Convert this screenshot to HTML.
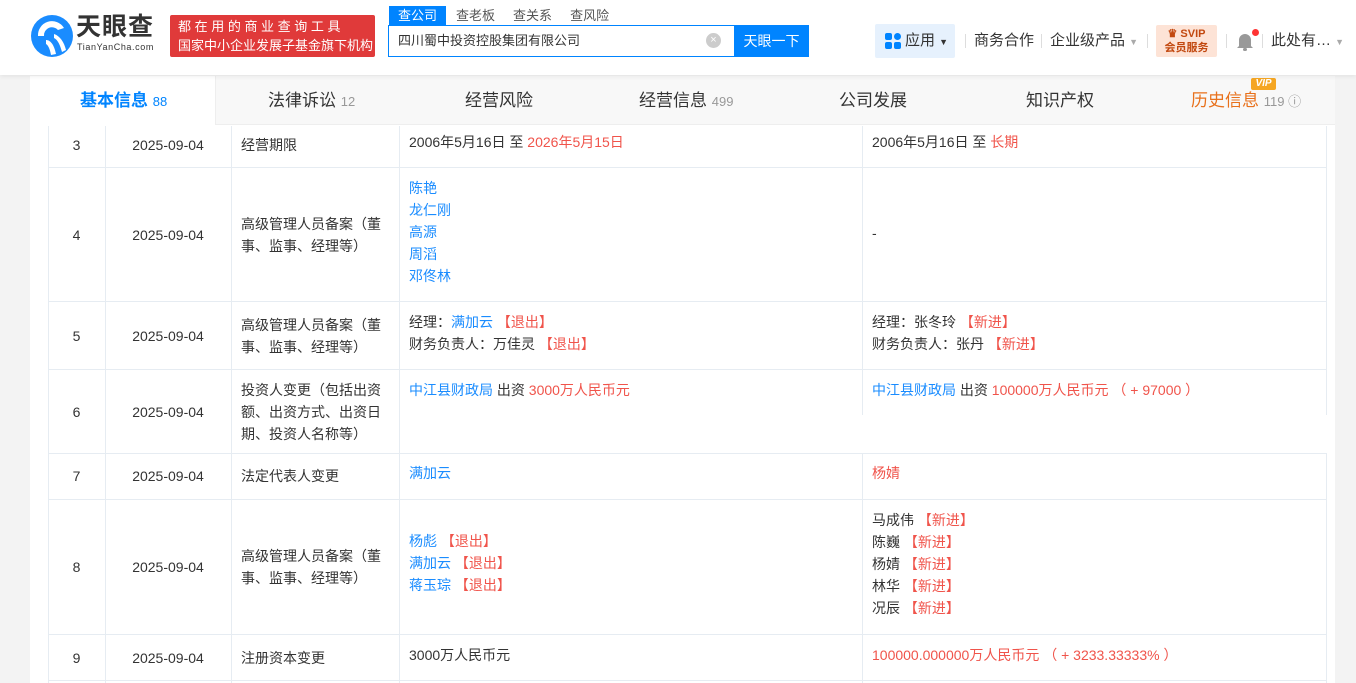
<!DOCTYPE html>
<html><head><meta charset="utf-8"><style>
*{margin:0;padding:0;box-sizing:border-box}
body{width:1356px;height:683px;overflow:hidden;background:#f3f3f3;font-family:"Liberation Sans","Noto Sans CJK SC",sans-serif;font-size:14px;color:#333;position:relative}
.a{position:absolute;white-space:nowrap}
.hdr{position:absolute;left:0;top:0;width:1356px;height:75px;background:#fff;box-shadow:0 2px 4px rgba(0,0,0,.06);z-index:2}
.main{position:absolute;left:30px;top:76px;width:1305px;height:607px;background:#fff}
.tabs{position:absolute;left:30px;top:76px;width:1305px;height:49px;background:#f8f8f8;border-bottom:1px solid #eee}
.tab{position:absolute;top:0;height:49px;line-height:49px;font-size:17px;color:#333}
.tab small{font-size:13px;color:#999}
.bl{color:#1a8cff}.rd{color:#f0544b}
.vl{position:absolute;width:1px;background:#e6ecf2}
.hl{position:absolute;height:1px;background:#e6ecf2}
.c{position:absolute;line-height:22px}
</style></head><body>
<div class="hdr">
 <svg class="a" style="left:30px;top:14px" width="44" height="44" viewBox="0 0 44 44"><circle cx="22" cy="22" r="21" fill="#1a8cff"/><path d="M8 22a14 14 0 0 1 26-8l-6 2a8 8 0 0 0-14 6z" fill="#fff"/><path d="M16 26c4 0 8 4 10 14l-5 1c-1-6-3-10-5-11z" fill="#fff"/><path d="M24 20c6 2 10 8 12 16l-4 2c-2-7-4-12-8-14z" fill="#fff"/></svg>
 <div class="a" style="left:76px;top:13px;font-size:25px;line-height:28px;font-weight:bold;color:#333;letter-spacing:1px">天眼查</div>
 <div class="a" style="left:77px;top:42px;font-size:9px;line-height:10px;color:#333;letter-spacing:.6px">TianYanCha.com</div>
 <div class="a" style="left:170px;top:15px;width:205px;height:42px;background:#e03a3a;border-radius:2px;color:#fff;font-size:13px;line-height:19px;padding:2px 0 0 8px">都 在 用 的 商 业 查 询 工 具<br>国家中小企业发展子基金旗下机构</div>
 <div class="a" style="left:389px;top:6px;width:57px;height:19px;background:#0084ff;color:#fff;font-size:13px;text-align:center;line-height:19px">查公司</div>
 <div class="a" style="left:456px;top:6px;font-size:13px;color:#555;line-height:19px">查老板&nbsp;&nbsp;&nbsp;&nbsp;&nbsp;查关系&nbsp;&nbsp;&nbsp;&nbsp;&nbsp;查风险</div>
 <div class="a" style="left:388px;top:25px;width:421px;height:32px;border:1px solid #0084ff;background:#fff"></div>
 <div class="a" style="left:398px;top:31px;font-size:13px;color:#333;line-height:20px">四川蜀中投资控股集团有限公司</div>
 <div class="a" style="left:706px;top:33px;width:15px;height:15px;border-radius:50%;background:#ccc;color:#fff;font-size:11px;text-align:center;line-height:15px">×</div>
 <div class="a" style="left:734px;top:25px;width:75px;height:32px;background:#0084ff;color:#fff;font-size:14px;text-align:center;line-height:32px">天眼一下</div>
 <div class="a" style="left:875px;top:24px;width:80px;height:34px;background:#e6f1fd;border-radius:2px"></div>
 <svg class="a" style="left:885px;top:33px" width="17" height="16"><rect x="0" y="0" width="7" height="7" rx="2" fill="#0084ff"/><rect x="9" y="0" width="7" height="7" rx="3.5" fill="#0084ff"/><rect x="0" y="9" width="7" height="7" rx="2" fill="#0084ff"/><rect x="9" y="9" width="7" height="7" rx="2" fill="#0084ff"/></svg>
 <div class="a" style="left:905px;top:31px;font-size:15px;line-height:20px">应用 <span style="font-size:9px">▼</span></div>
 <div class="a" style="left:965px;top:34px;width:1px;height:14px;background:#ddd"></div>
 <div class="a" style="left:974px;top:31px;font-size:15px;line-height:20px">商务合作</div>
 <div class="a" style="left:1041px;top:34px;width:1px;height:14px;background:#ddd"></div>
 <div class="a" style="left:1050px;top:31px;font-size:15px;line-height:20px">企业级产品 <span style="font-size:9px;color:#aaa">▼</span></div>
 <div class="a" style="left:1147px;top:34px;width:1px;height:14px;background:#ddd"></div>
 <div class="a" style="left:1156px;top:25px;width:61px;height:32px;background:#fde3d6;border-radius:2px;color:#c2480f;font-size:11px;font-weight:bold;text-align:center;line-height:14px;padding-top:2px">♛ SVIP<br>会员服务</div>
 <div class="a" style="left:1226px;top:34px;width:1px;height:14px;background:#ddd"></div>
 <svg class="a" style="left:1236px;top:31px" width="18" height="20"><path d="M3 15V9a6 6 0 0 1 12 0v6l2 2H1z" fill="#999"/><rect x="7" y="17" width="4" height="3" rx="1.5" fill="#999"/></svg>
 <div class="a" style="left:1252px;top:29px;width:7px;height:7px;border-radius:50%;background:#f33"></div>
 <div class="a" style="left:1262px;top:34px;width:1px;height:14px;background:#ddd"></div>
 <div class="a" style="left:1271px;top:31px;font-size:15px;line-height:20px">此处有… <span style="font-size:9px;color:#aaa">▼</span></div>
</div>
<div class="main"></div>
<div class="tabs">
 <div class="a" style="left:0;top:0;width:186px;height:49px;background:#fff;border-right:1px solid #eee"></div>
 <div class="tab" style="left:50px;color:#0084ff;font-weight:bold">基本信息 <small style="color:#0084ff;font-weight:normal">88</small></div>
 <div class="tab" style="left:238px">法律诉讼 <small>12</small></div>
 <div class="tab" style="left:435px">经营风险</div>
 <div class="tab" style="left:609px">经营信息 <small>499</small></div>
 <div class="tab" style="left:809px">公司发展</div>
 <div class="tab" style="left:996px">知识产权</div>
 <div class="tab" style="left:1161px;color:#e8711c">历史信息 <small>119 ⓘ</small></div>
 <div class="a" style="left:1221px;top:2px;width:25px;height:12px;background:#f5a623;color:#fff;font-size:10px;font-weight:bold;font-style:italic;text-align:center;line-height:12px;border-radius:2px">VIP</div>
</div>
<!-- table lines -->
<div class="vl" style="left:48px;top:126px;height:557px"></div>
<div class="vl" style="left:105px;top:126px;height:557px"></div>
<div class="vl" style="left:231px;top:126px;height:557px"></div>
<div class="vl" style="left:399px;top:126px;height:557px"></div>
<div class="vl" style="left:862px;top:126px;height:557px"></div>
<div class="vl" style="left:1326px;top:126px;height:557px"></div>
<div class="hl" style="left:48px;top:167px;width:1279px"></div>
<div class="hl" style="left:48px;top:301px;width:1279px"></div>
<div class="hl" style="left:48px;top:369px;width:1279px"></div>
<div class="hl" style="left:48px;top:453px;width:1279px"></div>
<div class="hl" style="left:48px;top:499px;width:1279px"></div>
<div class="hl" style="left:48px;top:634px;width:1279px"></div>
<div class="hl" style="left:48px;top:680px;width:1279px"></div>
<div class="a" style="left:862px;top:415px;width:473px;height:38px;background:#fff"></div>
<!-- rows -->
<div class="c" style="left:48px;width:57px;text-align:center;top:134px">3</div>
<div class="c" style="left:105px;width:126px;text-align:center;top:134px">2025-09-04</div>
<div class="c" style="left:241px;top:134px">经营期限</div>
<div class="c" style="left:409px;top:131px">2006年5月16日 至 <span class="rd">2026年5月15日</span></div>
<div class="c" style="left:872px;top:131px">2006年5月16日 至 <span class="rd">长期</span></div>

<div class="c" style="left:48px;width:57px;text-align:center;top:224px">4</div>
<div class="c" style="left:105px;width:126px;text-align:center;top:224px">2025-09-04</div>
<div class="c" style="left:241px;top:213px">高级管理人员备案（董<br>事、监事、经理等）</div>
<div class="c bl" style="left:409px;top:177px">陈艳<br>龙仁刚<br>高源<br>周滔<br>邓佟林</div>
<div class="c" style="left:872px;top:222px">-</div>

<div class="c" style="left:48px;width:57px;text-align:center;top:325px">5</div>
<div class="c" style="left:105px;width:126px;text-align:center;top:325px">2025-09-04</div>
<div class="c" style="left:241px;top:314px">高级管理人员备案（董<br>事、监事、经理等）</div>
<div class="c" style="left:409px;top:311px">经理：<span class="bl">满加云</span> <span class="rd">【退出】</span><br>财务负责人：万佳灵 <span class="rd">【退出】</span></div>
<div class="c" style="left:872px;top:311px">经理：张冬玲 <span class="rd">【新进】</span><br>财务负责人：张丹 <span class="rd">【新进】</span></div>

<div class="c" style="left:48px;width:57px;text-align:center;top:401px">6</div>
<div class="c" style="left:105px;width:126px;text-align:center;top:401px">2025-09-04</div>
<div class="c" style="left:241px;top:379px">投资人变更（包括出资<br>额、出资方式、出资日<br>期、投资人名称等）</div>
<div class="c" style="left:409px;top:379px"><span class="bl">中江县财政局</span> 出资 <span class="rd">3000万人民币元</span></div>
<div class="c" style="left:872px;top:379px"><span class="bl">中江县财政局</span> 出资 <span class="rd">100000万人民币元 （ + 97000 ）</span></div>

<div class="c" style="left:48px;width:57px;text-align:center;top:465px">7</div>
<div class="c" style="left:105px;width:126px;text-align:center;top:465px">2025-09-04</div>
<div class="c" style="left:241px;top:465px">法定代表人变更</div>
<div class="c bl" style="left:409px;top:462px">满加云</div>
<div class="c rd" style="left:872px;top:462px">杨婧</div>

<div class="c" style="left:48px;width:57px;text-align:center;top:556px">8</div>
<div class="c" style="left:105px;width:126px;text-align:center;top:556px">2025-09-04</div>
<div class="c" style="left:241px;top:545px">高级管理人员备案（董<br>事、监事、经理等）</div>
<div class="c" style="left:409px;top:530px"><span class="bl">杨彪</span> <span class="rd">【退出】</span><br><span class="bl">满加云</span> <span class="rd">【退出】</span><br><span class="bl">蒋玉琮</span> <span class="rd">【退出】</span></div>
<div class="c" style="left:872px;top:509px">马成伟 <span class="rd">【新进】</span><br>陈巍 <span class="rd">【新进】</span><br>杨婧 <span class="rd">【新进】</span><br>林华 <span class="rd">【新进】</span><br>况辰 <span class="rd">【新进】</span></div>

<div class="c" style="left:48px;width:57px;text-align:center;top:647px">9</div>
<div class="c" style="left:105px;width:126px;text-align:center;top:647px">2025-09-04</div>
<div class="c" style="left:241px;top:647px">注册资本变更</div>
<div class="c" style="left:409px;top:644px">3000万人民币元</div>
<div class="c rd" style="left:872px;top:644px">100000.000000万人民币元 （ + 3233.33333% ）</div>
</body></html>
